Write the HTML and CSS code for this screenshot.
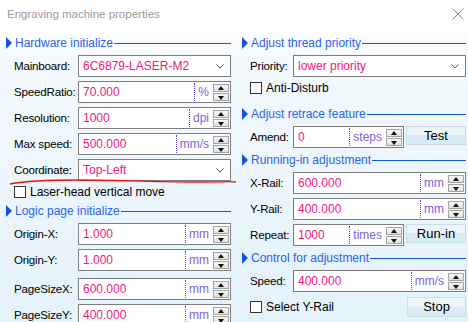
FILE: index.html
```html
<!DOCTYPE html>
<html lang="en" dir="ltr">

<head>
  <meta charset="utf-8">
  <title>Engraving machine properties</title>
  <link rel="stylesheet" href="styles.css">
</head>

<body>
  <div class="window">
    <div class="titlebar">
      <span class="title">Engraving machine properties</span>
      <svg class="close" width="12" height="12" viewBox="0 0 12 12"><path d="M0.5 0.5 L11.5 11.5 M11.5 0.5 L0.5 11.5" stroke="#8a8a8a" stroke-width="1" fill="none"/></svg>
    </div>

    <div class="content">
      <div class="col left">
        <div class="group-head"><i class="tri"></i><span>Hardware initialize</span></div>
        <div class="row">
          <label>Mainboard:</label>
          <div class="box select"><span class="val">6C6879-LASER-M2</span><svg class="chev" width="8" height="5" viewBox="0 0 8 5"><path d="M0.5 0.5 L4 4 L7.5 0.5" stroke="#555" fill="none"/></svg></div>
        </div>
        <div class="row">
          <label>SpeedRatio:</label>
          <div class="box spin"><span class="val">70.000</span><span class="unit">%</span><span class="arrows"><b class="up"></b><b class="down"></b></span></div>
        </div>
        <div class="row">
          <label>Resolution:</label>
          <div class="box spin"><span class="val">1000</span><span class="unit">dpi</span><span class="arrows"><b class="up"></b><b class="down"></b></span></div>
        </div>
        <div class="row">
          <label>Max speed:</label>
          <div class="box spin"><span class="val">500.000</span><span class="unit">mm/s</span><span class="arrows"><b class="up"></b><b class="down"></b></span></div>
        </div>
        <div class="row">
          <label>Coordinate:</label>
          <div class="box select"><span class="val">Top-Left</span><svg class="chev" width="8" height="5" viewBox="0 0 8 5"><path d="M0.5 0.5 L4 4 L7.5 0.5" stroke="#555" fill="none"/></svg></div>
        </div>
        <div class="check"><i class="cb"></i><span>Laser-head vertical move</span></div>

        <div class="group-head"><i class="tri"></i><span>Logic page initialize</span></div>
        <div class="row">
          <label>Origin-X:</label>
          <div class="box spin"><span class="val">1.000</span><span class="unit">mm</span><span class="arrows"><b class="up"></b><b class="down"></b></span></div>
        </div>
        <div class="row">
          <label>Origin-Y:</label>
          <div class="box spin"><span class="val">1.000</span><span class="unit">mm</span><span class="arrows"><b class="up"></b><b class="down"></b></span></div>
        </div>
        <div class="row wide">
          <label>PageSizeX:</label>
          <div class="box spin"><span class="val">600.000</span><span class="unit">mm</span><span class="arrows"><b class="up"></b><b class="down"></b></span></div>
        </div>
        <div class="row">
          <label>PageSizeY:</label>
          <div class="box spin"><span class="val">400.000</span><span class="unit">mm</span><span class="arrows"><b class="up"></b><b class="down"></b></span></div>
        </div>
      </div>

      <div class="col right">
        <div class="group-head"><i class="tri"></i><span>Adjust thread priority</span></div>
        <div class="row">
          <label>Priority:</label>
          <div class="box select"><span class="val">lower priority</span><svg class="chev" width="8" height="5" viewBox="0 0 8 5"><path d="M0.5 0.5 L4 4 L7.5 0.5" stroke="#555" fill="none"/></svg></div>
        </div>
        <div class="check"><i class="cb"></i><span>Anti-Disturb</span></div>

        <div class="group-head spaced"><i class="tri"></i><span>Adjust retrace feature</span></div>
        <div class="row">
          <label>Amend:</label>
          <div class="box spin short"><span class="val">0</span><span class="unit">steps</span><span class="arrows"><b class="up"></b><b class="down"></b></span></div>
          <button type="button" class="btn">Test</button>
        </div>

        <div class="group-head"><i class="tri"></i><span>Running-in adjustment</span></div>
        <div class="row">
          <label>X-Rail:</label>
          <div class="box spin"><span class="val">600.000</span><span class="unit">mm</span><span class="arrows"><b class="up"></b><b class="down"></b></span></div>
        </div>
        <div class="row">
          <label>Y-Rail:</label>
          <div class="box spin"><span class="val">400.000</span><span class="unit">mm</span><span class="arrows"><b class="up"></b><b class="down"></b></span></div>
        </div>
        <div class="row">
          <label>Repeat:</label>
          <div class="box spin short"><span class="val">1000</span><span class="unit">times</span><span class="arrows"><b class="up"></b><b class="down"></b></span></div>
          <button type="button" class="btn">Run-in</button>
        </div>

        <div class="group-head"><i class="tri"></i><span>Control for adjustment</span></div>
        <div class="row">
          <label>Speed:</label>
          <div class="box spin"><span class="val">400.000</span><span class="unit">mm/s</span><span class="arrows"><b class="up"></b><b class="down"></b></span></div>
        </div>
        <div class="row last">
          <div class="check inline"><i class="cb"></i><span>Select Y-Rail</span></div>
          <button type="button" class="btn">Stop</button>
        </div>
      </div>
    </div>

    <!-- hand drawn red underline -->
    <svg class="scribble" width="240" height="10" viewBox="0 0 240 10"><path d="M10 7 C 25 4, 45 3, 80 3 S 150 5, 195 5 S 225 4, 236 5" stroke="#f01010" stroke-width="1.3" fill="none"/></svg>
  </div>
</body>

</html>
```

FILE: styles.css
```css
body {
  margin: 0;
  font-family: "Liberation Sans", Arial, sans-serif;
  font-size: 12px;
  color: #000;
}

.window {
  position: relative;
  width: 468px;
  height: 322px;
  overflow: hidden;
  background: linear-gradient(#ffffff 0px, #ffffff 30px, #f3f9fd 60px, #e4f2fa 322px);
}

.titlebar {
  height: 30px;
  display: flex;
  align-items: center;
  justify-content: space-between;
  padding: 0 4px 0 7px;
  box-sizing: border-box;
}

.title {
  font-size: 11.5px;
  color: #9a9a9a;
  margin-top: -2px;
}

.close {
  margin-top: -3px;
}

.content {
  display: grid;
  grid-template-columns: 225px 224px;
  column-gap: 11px;
  padding: 5px 2px 0 6px;
}

.group-head {
  display: flex;
  align-items: center;
  height: 16px;
  margin-top: 4px;
  color: #2b62ee;
  font-size: 12px;
}

.group-head:first-child {
  margin-top: 0;
}

.group-head.spaced {
  margin-top: 11px;
}

.group-head::after {
  content: "";
  flex: 1;
  border-top: 1px solid #0d5ad6;
  margin-left: 1px;
}

.tri {
  width: 0;
  height: 0;
  border-left: 6px solid #1554e0;
  border-top: 6px solid transparent;
  border-bottom: 6px solid transparent;
  margin-right: 3px;
}

.row {
  display: flex;
  align-items: flex-start;
  height: 22px;
  margin-top: 4px;
  padding-left: 8px;
}

.row.wide {
  margin-top: 7px;
}

.row label {
  width: 64px;
  line-height: 22px;
  flex: none;
  white-space: nowrap;
  font-size: 11.6px;
  letter-spacing: -0.2px;
}

.right .row label {
  width: 43px;
}

.box {
  flex: 1;
  height: 22px;
  box-sizing: border-box;
  border: 1px solid #7e7e7e;
  background: #fff;
  display: flex;
  align-items: center;
  padding-left: 4px;
}

.box.short {
  flex: none;
  width: 111px;
}

.val {
  flex: 1;
  color: #f0187f;
}

.chev {
  margin-right: 6px;
}

.unit {
  color: #8060de;
  border-left: 1px dotted #5a3fe0;
  height: 18px;
  line-height: 18px;
  padding: 0 4px 0 3px;
}

.arrows {
  display: flex;
  flex-direction: column;
  gap: 1px;
  margin-right: 1px;
}

.arrows b {
  display: block;
  width: 16px;
  height: 8px;
  box-sizing: border-box;
  border: 1px solid #a4a4a4;
  background: linear-gradient(#f6f6f6, #e2e2e2);
  position: relative;
}

.arrows b::after {
  content: "";
  position: absolute;
  left: 4px;
  width: 0;
  height: 0;
  border-left: 3.5px solid transparent;
  border-right: 3.5px solid transparent;
}

.arrows .up::after {
  top: 1px;
  border-bottom: 4px solid #111;
}

.arrows .down::after {
  top: 2px;
  border-top: 4px solid #111;
}

.btn {
  margin-left: 2px;
  flex: 1;
  height: 19px;
  border: 1px solid #c9dde8;
  background: linear-gradient(#eef5f9 0%, #eef5f9 45%, #d9ecf6 50%, #d7ebf5 100%);
  font-family: "Liberation Sans", Arial, sans-serif;
  font-size: 13px;
  color: #000;
  padding: 0;
  line-height: 16px;
}

.row.last {
  margin-top: 5px;
  height: 21px;
}

.row.last .btn {
  flex: none;
  width: 59px;
  height: 20px;
  margin-left: auto;
}

.check {
  display: flex;
  align-items: center;
  height: 14px;
  margin-top: 4px;
  padding-left: 8px;
}

.check.inline {
  padding-left: 0;
  margin-top: 3px;
}

.cb {
  width: 12px;
  height: 12px;
  box-sizing: border-box;
  border: 1px solid #333;
  background: #fff;
  margin-right: 4px;
}

.scribble {
  position: absolute;
  left: 0;
  top: 177px;
}
```
